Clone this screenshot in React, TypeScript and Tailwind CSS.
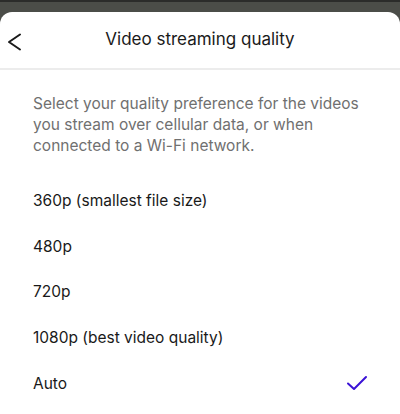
const options = [
  { id: 1, label: '360p (smallest file size)' },
  { id: 2, label: '480p' },
  { id: 3, label: '720p' },
  { id: 4, label: '1080p (best video quality)' },
  { id: 5, label: 'Auto', selected: true },
];

export default function App() {
  return (
    <div
      className="w-[400px] h-[414px] overflow-hidden bg-[#4b4d48] border-t-2 border-[#2b2c2a] flex flex-col"
      style={{ fontFamily: 'Inter, "Liberation Sans", sans-serif' }}
    >
      <div className="h-[10px] shrink-0" />
      <div className="flex-1 bg-white rounded-t-[12px] flex flex-col">
        {/* header */}
        <div className="h-[58px] shrink-0 flex items-center relative border-b-2 border-[#ececec]">
          <button className="absolute left-[7px] top-[21px]">
            <svg width="15" height="18" viewBox="0 0 15 18" fill="none">
              <path
                d="M13 1.5 L2 9 L13 16.5"
                stroke="#1a1a1a"
                strokeWidth="2"
                strokeLinecap="round"
                strokeLinejoin="round"
              />
            </svg>
          </button>
          <p className="w-full text-center text-[17px] text-[#1a1a1a]">Video streaming quality</p>
        </div>

        <div className="px-[33px] pt-[23px]">
          <p className="text-[15.5px] leading-[21px] text-[#707070]">
            Select your quality preference for the videos you stream over cellular data, or when
            connected to a Wi-Fi network.
          </p>
        </div>

        <div className="flex flex-col pl-[33px] pr-[32px] pt-[22px]">
          {options.map((o) => (
            <div key={o.id} className="h-[45.6px] flex items-center justify-between">
              <span className="text-[15.5px] text-[#191919]">{o.label}</span>
              {o.selected && (
                <svg width="22" height="16" viewBox="0 0 22 16" fill="none">
                  <path
                    d="M2 8.5 L8 14 L20 2"
                    stroke="#3b12d6"
                    strokeWidth="2"
                    strokeLinecap="round"
                    strokeLinejoin="round"
                  />
                </svg>
              )}
            </div>
          ))}
        </div>
      </div>
    </div>
  );
}
